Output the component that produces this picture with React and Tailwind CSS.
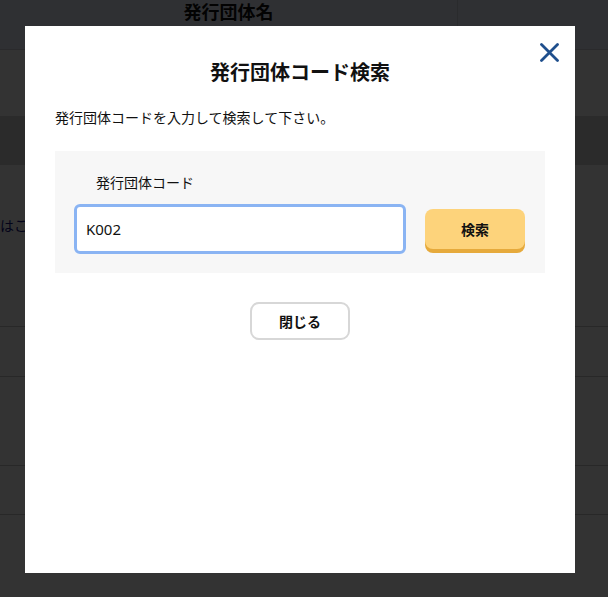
import React from "react";

const jp = { fontFamily: '"Noto Sans CJK JP", "Noto Sans", sans-serif' };

function BackgroundTable() {
    return (
        <div className="w-full bg-white text-[#222]">
            <div className="flex h-[50px] bg-[#ebf0ff] border-b border-[#cfd3dc]">
                <div className="w-[458px] flex justify-center border-r border-[#d0d4de] font-bold text-[18px] leading-[22px] text-[#111]">
                    発行団体名
                </div>
                <div className="flex-1" />
            </div>
            <div className="h-[66px]" />
            <div className="h-[49px] bg-[#d6d6d6]" />
            <div className="h-[162px] border-b border-[#c8c8c8] pt-[47px]">
                <span className="text-[14px] leading-[20px] text-[#101080] whitespace-nowrap">はこだて市</span>
            </div>
            <div className="h-[50px] border-b border-[#c8c8c8]" />
            <div className="h-[89px] border-b border-[#c8c8c8]" />
            <div className="h-[49px] border-b border-[#c8c8c8]" />
            <div className="h-[81px]" />
        </div>
    );
}

export default function App() {
    return (
        <div className="relative w-full h-[597px] overflow-hidden" style={jp}>
            <BackgroundTable />
            <div className="absolute inset-0 bg-black/80" />

            <div className="absolute left-[25px] top-[26px] w-[550px] h-[547px] bg-white px-[30px] pt-[32px] text-[#111]">
                <button className="absolute right-[16px] top-[17px] w-[19px] h-[19px] text-[#1f4f8d]">
                    <svg viewBox="0 0 19 19" className="w-full h-full" fill="none" stroke="currentColor" strokeWidth="2.8" strokeLinecap="round">
                        <path d="M1.5 1.5 L17.5 17.5 M17.5 1.5 L1.5 17.5" />
                    </svg>
                </button>

                <h2 className="text-center font-bold text-[20px] leading-[28px]">発行団体コード検索</h2>

                <p className="mt-[21px] text-[14px] leading-[20px]">発行団体コードを入力して検索して下さい。</p>

                <div className="mt-[24px] bg-[#f7f7f7] px-[19px] pt-[21px] pb-[19px]">
                    <div className="pl-[22px] text-[14px] leading-[20px]">発行団体コード</div>
                    <div className="mt-[12px] flex items-center gap-[19px]">
                        <div className="w-[332px] h-[50px] rounded-[6px] border-[3px] border-[#8ab4f3] bg-white flex items-center pl-[9px]">
                            <span className="text-[15px] text-[#111]" style={{ fontFamily: '"Noto Sans", "Noto Sans CJK JP", sans-serif' }}>K002</span>
                        </div>
                        <button className="w-[100px] h-[40px] rounded-[8px] bg-[#fdd37b] shadow-[0_4px_0_#e6aa3c] font-bold text-[14px] text-[#111]">
                            検索
                        </button>
                    </div>
                </div>

                <div className="mt-[29px] flex justify-center">
                    <button className="w-[100px] h-[38px] rounded-[9px] border-2 border-[#d7d7d7] bg-white font-bold text-[14px] text-[#111]">
                        閉じる
                    </button>
                </div>
            </div>
        </div>
    );
}
